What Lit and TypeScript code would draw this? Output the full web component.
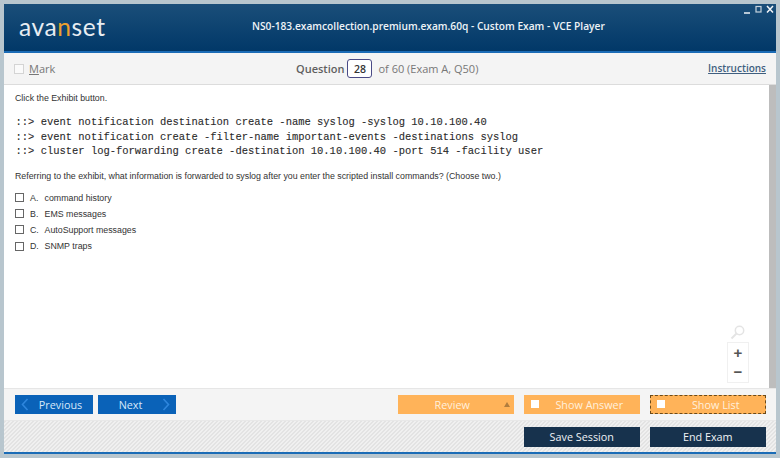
import { LitElement, html, css } from "lit";
import { customElement } from "lit/decorators.js";

@customElement("app-root")
export class AppRoot extends LitElement {
  static styles = css`
    :host { display: block; width: 780px; height: 458px; background: #b8c6ce; box-sizing: border-box; padding: 4px 4px 4px 4px; overflow: hidden; }
    .win { height: 100%; display: flex; flex-direction: column; }
    .head { height: 47px; flex: none; background: linear-gradient(#1a4e79, #013868); border-bottom: 2px solid #1b6cb6; position: relative; display: flex; align-items: center; padding-left: 15px; }
    .logo { font: 400 24.5px "Lato", sans-serif; color: #e8edf2; letter-spacing: 0.6px; width: 233px; margin-top: -3px; }
    .logo b { font-weight: 400; color: #eda02e; }
    .title { font: 600 10.2px "Open Sans", sans-serif; color: #eef3f7; margin-top: -3px; }
    .ctl { position: absolute; right: 2px; top: 1px; display: flex; gap: 4px; align-items: center; }
    .tool { height: 31px; flex: none; background: #f4f4f4; border-bottom: 1px solid #dcdcdc; display: flex; align-items: center; padding: 0 10px; color: #666; }
    .mark { display: flex; align-items: center; gap: 5px; font: 11px "Open Sans", sans-serif; color: #777; width: 282px; }
    .cb0 { width: 8px; height: 8px; border: 1px solid #d4d4d4; background: #fafafa; }
    .q { display: flex; align-items: center; font: 11px "Open Sans", sans-serif; color: #777; }
    .q strong { font-weight: 600; color: #5f5f5f; }
    .num { width: 23px; height: 17px; border: 1px solid #4a4a86; border-radius: 3px; background: #fff; color: #333; font-weight: 600; display: flex; align-items: center; justify-content: center; margin: 0 6px 0 3px; font-size: 10.5px; }
    .ins { margin-left: auto; margin-right: 0; margin-top: -2px; font: 600 10px "Open Sans", sans-serif; color: #3f5f80; text-decoration: underline; }
    .mid { flex: 1; display: flex; min-height: 0; }
    .content { flex: 1; background: #fff; padding: 8px 11px; font: 8.82px "Liberation Sans", sans-serif; color: #333; position: relative; }
    .scroll { width: 7px; background: #bdbdbd; flex: none; }
    .exh { margin: 12px 1px 0 0.5px; font: 400 10.48px/14.5px "Liberation Mono", monospace; color: #2a2a2a; white-space: pre; -webkit-text-stroke: 0.1px #2a2a2a; }
    .ask { margin-top: 12px; }
    .opts { margin-top: 12px; display: flex; flex-direction: column; gap: 6.2px; }
    .opt { display: flex; align-items: center; height: 10px; }
    .box { width: 7px; height: 7px; border: 1px solid #666; margin-right: 6px; background: #fff; }
    .let { width: 14.5px; }
    .zoom { position: absolute; right: 20px; top: 240px; display: flex; flex-direction: column; align-items: center; }
    .zbox { margin-top: 2px; width: 20px; height: 39px; border: 1px solid #f0f0f0; display: flex; flex-direction: column; align-items: center; justify-content: space-around; font: 700 15px/16px "Liberation Sans", sans-serif; color: #555; }
    .bar1 { height: 31px; flex: none; background: #f4f4f4; border-top: 1px solid #e6e6e6; display: flex; align-items: center; padding: 0 10px 0 11px; gap: 5px; }
    .btn { height: 19px; display: flex; align-items: center; justify-content: center; font: 10.8px "Open Sans", sans-serif; box-sizing: border-box; position: relative; }
    .blue { width: 78px; background: #0a62b8; color: #d7e8f8; }
    .arr { position: absolute; top: 3px; }
    .spacer { flex: 1; }
    .or { width: 116.5px; background: #ffb359; color: #fff0dd; }
    .gap { margin-left: 4.5px; }
    .w { width: 8px; height: 8px; background: #fff; position: absolute; left: 7px; top: 5px; }
    .dash { border: 1px dashed #6b4a1a; }
    .tri { position: absolute; right: 4px; top: 7px; width: 0; height: 0; border: 3px solid transparent; border-top: 0; border-bottom: 5px solid #b07d3e; }
    .bar2 { height: 31px; flex: none; display: flex; align-items: center; justify-content: flex-end; padding: 0 10px 0 0; gap: 9.5px; border-top: 1px solid #e8e8e8; background: linear-gradient(135deg, #e3e3e3 25%, #f0f0f0 25%, #f0f0f0 50%, #e3e3e3 50%, #e3e3e3 75%, #f0f0f0 75%) 0 0 / 4px 4px; }
    .dark { width: 116.5px; height: 20px; background: #17324d; color: #f0f3f6; }
    .line { height: 2px; background: #1b6cb6; flex: none; }
  `;

  render() {
    const opts = [["A.", "command history"], ["B.", "EMS messages"], ["C.", "AutoSupport messages"], ["D.", "SNMP traps"]];
    return html`<div class="win">
      <div class="head">
        <div class="logo">ava<b>n</b>set</div>
        <div class="title">NS0-183.examcollection.premium.exam.60q - Custom Exam - VCE Player</div>
        <div class="ctl">
          <svg width="7" height="9" viewBox="0 0 7 9"><path d="M0 8h6" stroke="#dfe8ef" stroke-width="1.6"/></svg>
          <svg width="7" height="9" viewBox="0 0 7 9"><rect x="1" y="1.5" width="5" height="5.5" fill="none" stroke="#c7d4de" stroke-width="1.2"/></svg>
          <svg width="8" height="9" viewBox="0 0 8 9"><path d="M1 1l6 6.5M7 1L1 7.5" stroke="#f2f5f8" stroke-width="1.5"/></svg>
        </div>
      </div>
      <div class="tool">
        <div class="mark"><span class="cb0"></span><span><u>M</u>ark</span></div>
        <div class="q"><strong>Question</strong><span class="num">28</span>of 60 (Exam A, Q50)</div>
        <div class="ins">Instructions</div>
      </div>
      <div class="mid">
        <div class="content">
          <div>Click the Exhibit button.</div>
          <div class="exh">::&gt; event notification destination create -name syslog -syslog 10.10.100.40
::&gt; event notification create -filter-name important-events -destinations syslog
::&gt; cluster log-forwarding create -destination 10.10.100.40 -port 514 -facility user</div>
          <div class="ask">Referring to the exhibit, what information is forwarded to syslog after you enter the scripted install commands? (Choose two.)</div>
          <div class="opts">${opts.map(([l, t]) => html`<div class="opt"><span class="box"></span><span class="let">${l}</span><span>${t}</span></div>`)}</div>
          <div class="zoom">
            <svg width="16" height="15" viewBox="0 0 16 15"><circle cx="9.5" cy="5.5" r="4.2" fill="none" stroke="#e4e4e4" stroke-width="1.5"/><path d="M6.5 8.5L1.5 13.5" stroke="#e4e4e4" stroke-width="2"/></svg>
            <div class="zbox"><span>+</span><span>−</span></div>
          </div>
        </div>
        <div class="scroll"></div>
      </div>
      <div class="bar1">
        <div class="btn blue">
          <svg class="arr" style="left:6px" width="8" height="13" viewBox="0 0 8 13"><path d="M6.5 1L1.5 6.5l5 5.5" fill="none" stroke="#2e86dd" stroke-width="1.6"/></svg>
          <span style="margin-left:13px">Previous</span>
        </div>
        <div class="btn blue">
          <span style="margin-right:13px">Next</span>
          <svg class="arr" style="right:6px" width="8" height="13" viewBox="0 0 8 13"><path d="M1.5 1l5 5.5L1.5 12" fill="none" stroke="#2e86dd" stroke-width="1.6"/></svg>
        </div>
        <div class="spacer"></div>
        <div class="btn or"><span style="margin-right:7px">Review</span><span class="tri"></span></div>
        <div class="btn or gap"><span class="w"></span><span style="margin-left:15px">Show Answer</span></div>
        <div class="btn or gap dash"><span class="w" style="left:6px;top:4px"></span><span style="margin-left:16px">Show List</span></div>
      </div>
      <div class="bar2">
        <div class="btn dark">Save Session</div>
        <div class="btn dark">End Exam</div>
      </div>
      <div class="line"></div>
    </div>`;
  }
}
